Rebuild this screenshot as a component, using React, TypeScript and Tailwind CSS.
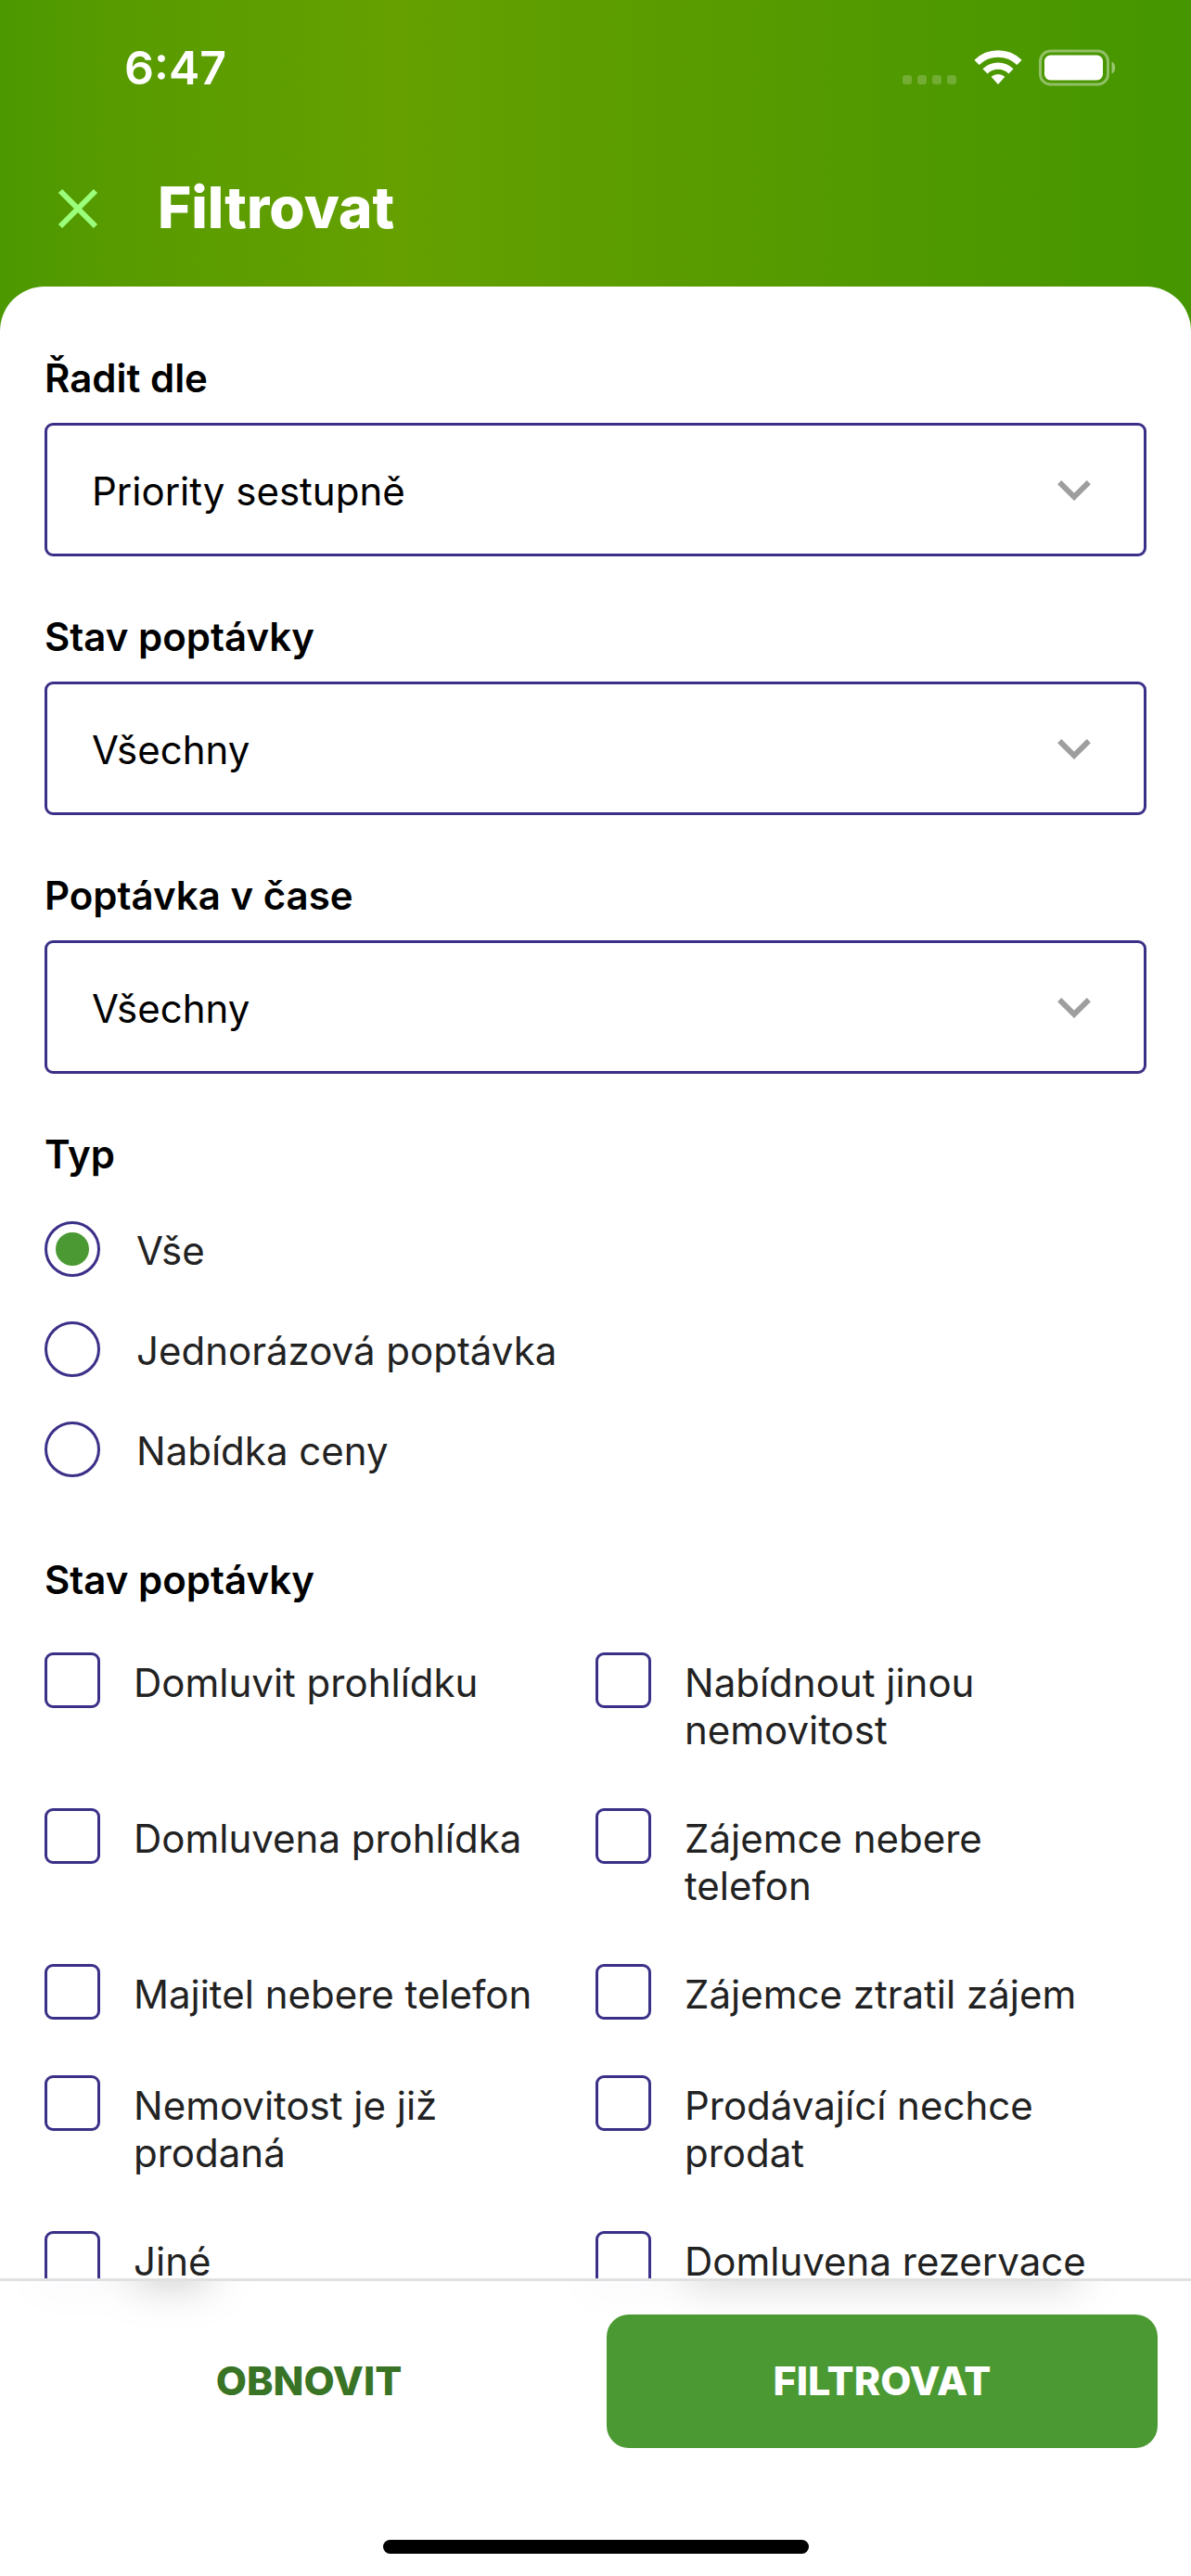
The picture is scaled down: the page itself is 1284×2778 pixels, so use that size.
import { useId, useState } from "react";

const SORT_OPTIONS = ["Priority sestupně", "Priority vzestupně", "Nejnovější"];
const STATE_OPTIONS = ["Všechny", "Aktivní", "Uzavřené"];
const TIME_OPTIONS = ["Všechny", "Dnes", "Tento týden"];
const TYPES = ["Vše", "Jednorázová poptávka", "Nabídka ceny"];

const STATES = [
  "Domluvit prohlídku",
  "Nabídnout jinou nemovitost",
  "Domluvena prohlídka",
  "Zájemce nebere telefon",
  "Majitel nebere telefon",
  "Zájemce ztratil zájem",
  "Nemovitost je již prodaná",
  "Prodávající nechce prodat",
  "Jiné",
  "Domluvena rezervace",
];

function StatusBar() {
  return (
    <div className="flex h-[146px] items-center justify-between pr-20 pl-[134px]">
      <span className="text-[50px] leading-[60px] font-semibold">6:47</span>
      <div className="flex items-center gap-[18px]">
        <svg className="h-10 w-[60px]" viewBox="0 0 60 40" fill="white" fillOpacity="0.2" aria-hidden="true">
          <rect x="1" y="28" width="10" height="10" rx="3" />
          <rect x="17" y="28" width="10" height="10" rx="3" />
          <rect x="33" y="28" width="10" height="10" rx="3" />
          <rect x="49" y="28" width="10" height="10" rx="3" />
        </svg>
        <svg className="h-10 w-[52px]" viewBox="0 0 52 40" aria-hidden="true">
          <g fill="none" stroke="white" strokeWidth="7.4">
            <path d="M3 14.4 A33 33 0 0 1 49 14.4" />
            <path d="M12 23.8 A20 20 0 0 1 40 23.8" />
          </g>
          <path d="M26 38 L18.6 29.8 A11 11 0 0 1 33.4 29.8 Z" fill="white" />
        </svg>
        <svg className="h-10 w-[84px]" viewBox="0 0 84 40" aria-hidden="true">
          <rect x="1.5" y="2" width="73" height="36" rx="11" fill="none" stroke="white" strokeOpacity="0.4" strokeWidth="3" />
          <rect x="6" y="6.5" width="63" height="27" rx="6.5" fill="white" />
          <path d="M78.500 13.500 C83.500 15.500 83.500 24.500 78.500 26.500 Z" fill="white" fillOpacity="0.45" />
        </svg>
      </div>
    </div>
  );
}

function SelectField({ label, options }: { label: string; options: string[] }) {
  const id = useId();

  return (
    <div className="flex flex-col gap-[22px]">
      <label htmlFor={id} className="leading-[53px] font-semibold text-black">
        {label}
      </label>
      <div className="relative">
        <select
          id={id}
          className="h-36 w-full appearance-none rounded-[9px] border-3 border-[#3b3088] bg-white pt-0.5 pr-36 pl-12 text-black"
        >
          {options.map((option) => (
            <option key={option}>{option}</option>
          ))}
        </select>
        <svg
          className="pointer-events-none absolute top-[61px] right-[60px] h-6 w-9"
          viewBox="0 0 36 24"
          fill="none"
          stroke="#9e9e9e"
          strokeWidth="6"
          aria-hidden="true"
        >
          <path d="M2.200 3.200 L18 18.800 L33.800 3.200" />
        </svg>
      </div>
    </div>
  );
}

export default function App() {
  const [type, setType] = useState(TYPES[0]);
  const [states, setStates] = useState<string[]>([]);

  const toggleState = (state: string) => {
    setStates((prev) => (prev.includes(state) ? prev.filter((s) => s !== state) : [...prev, state]));
  };

  const reset = () => {
    setType(TYPES[0]);
    setStates([]);
  };

  return (
    <div className="flex min-h-screen flex-col bg-white font-[Inter,sans-serif] text-[42px] leading-[51px] text-[#222222]">
      <div className="bg-[linear-gradient(to_right,#4c9800_0%,#579b00_9%,#65a000_33%,#5d9d00_50%,#4d9800_83%,#459600_100%)]">
        <header className="text-white">
          <StatusBar />
          <div className="flex h-[163px] items-center gap-16 px-[62px] pb-[6px]">
            <button type="button" aria-label="Zavřít" className="h-11 w-11">
              <svg viewBox="0 0 44 44" fill="none" stroke="#9cff7c" strokeWidth="6" aria-hidden="true">
                <path d="M3 3 L41 41 M41 3 L3 41" />
              </svg>
            </button>
            <h1 className="pb-0.5 text-[62px] leading-[72px] font-extrabold">Filtrovat</h1>
          </div>
        </header>
        <div className="h-12 rounded-t-[48px] bg-white" />
      </div>

      <main className="flex flex-col px-12 pt-6 pb-[300px]">
        <div className="flex flex-col gap-[60px]">
          <SelectField label="Řadit dle" options={SORT_OPTIONS} />
          <SelectField label="Stav poptávky" options={STATE_OPTIONS} />
          <SelectField label="Poptávka v čase" options={TIME_OPTIONS} />
        </div>

        <fieldset className="mt-[60px]">
          <legend className="leading-[53px] font-semibold text-black">Typ</legend>
          <div className="mt-[46px] flex flex-col items-start gap-12">
            {TYPES.map((item) => (
              <label key={item} className="flex h-[60px] items-center gap-[39px]">
                <input
                  type="radio"
                  name="type"
                  value={item}
                  checked={type === item}
                  onChange={() => setType(item)}
                  className="grid h-[60px] w-[60px] shrink-0 appearance-none place-items-center rounded-full border-3 border-[#3b3088] before:h-9 before:w-9 before:rounded-full checked:before:bg-[#4b9932]"
                />
                <span className="pt-0.5">{item}</span>
              </label>
            ))}
          </div>
        </fieldset>

        <fieldset className="mt-[84px]">
          <legend className="leading-[53px] font-semibold text-black">Stav poptávky</legend>
          <div className="mt-[52px] grid grid-cols-2 gap-y-[60px]">
            {STATES.map((state) => (
              <label key={state} className="flex items-start gap-9 pr-[60px]">
                <input
                  type="checkbox"
                  checked={states.includes(state)}
                  onChange={() => toggleState(state)}
                  className="h-[60px] w-[60px] shrink-0 appearance-none rounded-[9px] border-3 border-[#3b3088] checked:bg-[#4b9932]"
                />
                <span className="-mb-px pt-[7px]">{state}</span>
              </label>
            ))}
          </div>
        </fieldset>
      </main>

      <footer className="fixed inset-x-0 bottom-0 overflow-hidden border-t-3 border-[#e0e0e0] bg-white">
        <div className="absolute inset-x-12 -top-10 grid h-10 grid-cols-2 blur-[24px]" aria-hidden="true">
          <div className="flex gap-9">
            <div className="w-[60px] bg-[#3b3088]/5" />
            <div className="w-20 bg-black/25" />
          </div>
          <div className="flex gap-9">
            <div className="w-[60px] bg-[#3b3088]/5" />
            <div className="w-[424px] bg-black/20" />
          </div>
        </div>
        <div className="relative pt-9 pb-6">
          <div className="grid grid-cols-2 gap-6 px-9 text-[43px] font-extrabold">
            <button type="button" onClick={reset} className="h-36 rounded-3xl pb-0.5 text-[#387326]">
              OBNOVIT
            </button>
            <button type="button" className="h-36 rounded-3xl bg-[#4b9932] pb-0.5 text-white">
              FILTROVAT
            </button>
          </div>
          <div className="mx-auto mt-[99px] h-[15px] w-[459px] rounded-full bg-black" />
        </div>
      </footer>
    </div>
  );
}
